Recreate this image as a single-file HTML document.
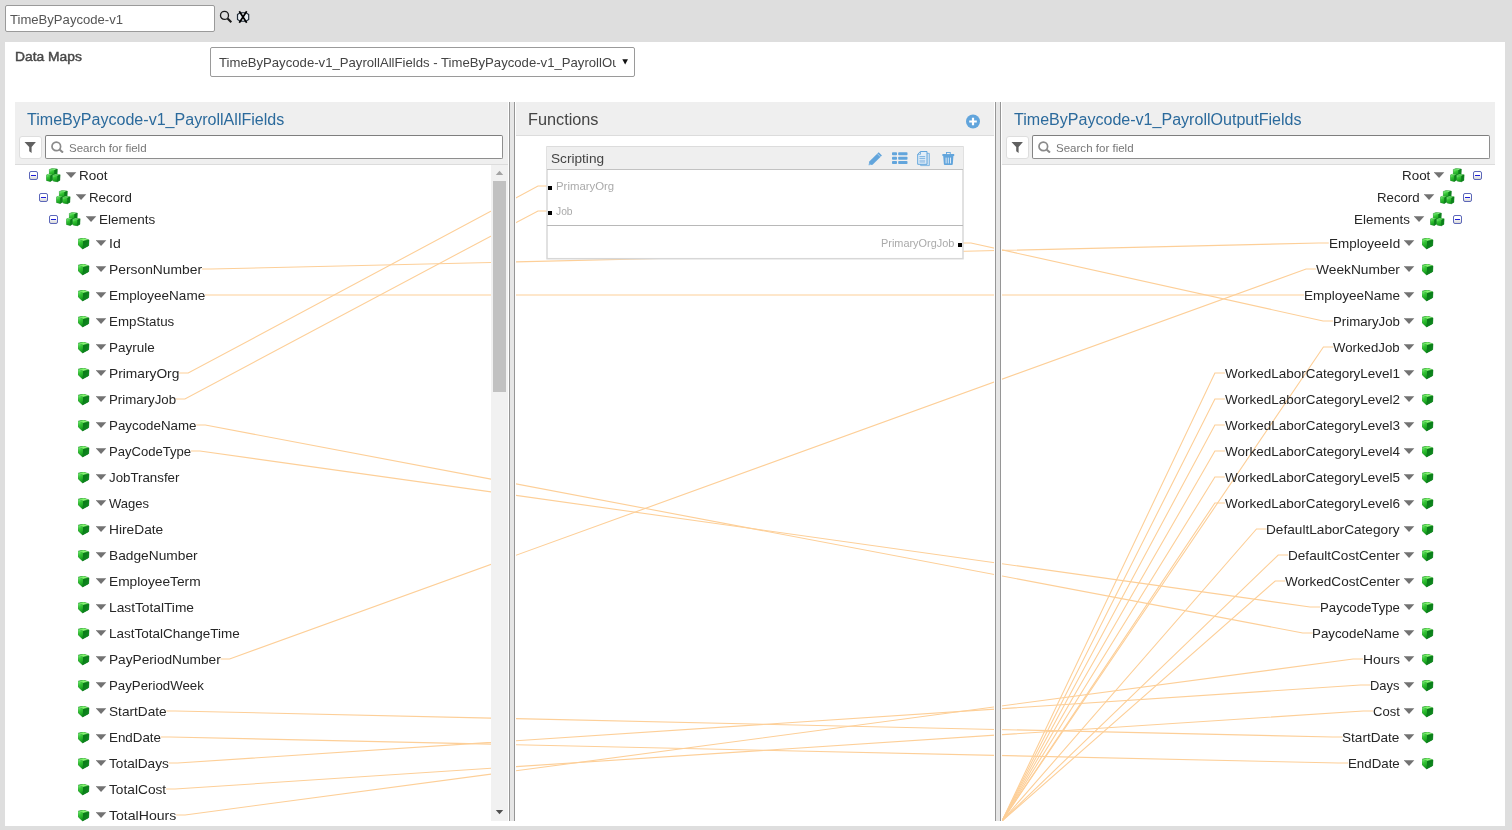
<!DOCTYPE html>
<html><head><meta charset="utf-8"><title>Data Maps</title>
<style>
html,body{margin:0;padding:0}
body{width:1512px;height:830px;overflow:hidden;background:#dedede;position:relative;font-family:'Liberation Sans',sans-serif}
.ab,.t,.bx,.mn{position:absolute}
.t{white-space:pre;transform-origin:0 0;display:block}
.mn{width:7px;height:7px;border:1px solid #5c67b9;border-radius:2px;background:linear-gradient(#fff 35%,#d8d8d8)}
.mn i{position:absolute;left:1px;top:3px;width:5px;height:1px;background:#1d1dd8}
.inp{position:absolute;background:#fff;border:1px solid #9a9a9a;border-radius:2px;box-sizing:border-box}
.hdr{position:absolute;background:#efefef;border-bottom:1px solid #dcdcdc;box-sizing:border-box}
.split{position:absolute;top:102px;height:719px;width:4px;background:#e6e6e6;border-left:1px solid #969696;border-right:1px solid #969696}
</style></head><body>
<svg width="0" height="0" style="position:absolute">
<defs>
<linearGradient id="gT" x1="0" y1="0" x2="1" y2="1"><stop offset="0" stop-color="#35cc35"/><stop offset="0.55" stop-color="#8ff77a"/><stop offset="1" stop-color="#2fbf2f"/></linearGradient>
<linearGradient id="gL" x1="0" y1="0" x2="0.35" y2="1"><stop offset="0" stop-color="#86f286"/><stop offset="0.45" stop-color="#33c433"/><stop offset="1" stop-color="#149a1c"/></linearGradient>
<linearGradient id="gR" x1="0" y1="0" x2="1" y2="1"><stop offset="0" stop-color="#087416"/><stop offset="1" stop-color="#0f8f20"/></linearGradient>
<g id="cube">
<path d="M0.1 1.2L5.4 0L11 1.9L10.6 7.7L4.6 10.9L0.4 6.9Z" fill="#0b7418" stroke="#0b7418" stroke-width="0.5" stroke-linejoin="round"/>
<path d="M0.1 1.2L5.4 0L11 1.9L5.3 3.1Z" fill="url(#gT)"/>
<path d="M0.1 1.2L5.3 3.1L4.6 10.9L0.4 6.9Z" fill="url(#gL)"/>
<path d="M5.3 3.1L11 1.9L10.6 7.7L4.6 10.9Z" fill="url(#gR)"/>
</g>
<g id="scube">
<path d="M0 1.1L2.8 0.1L8 0.7L7.8 6.4L5.2 7.9L0.3 7Z" fill="#0b7418" stroke="#0b7418" stroke-width="0.4" stroke-linejoin="round"/>
<path d="M0 1.1L2.8 0.1L8 0.7L5.3 1.7Z" fill="#7ff07a"/>
<path d="M0 1.1L5.3 1.7L5.2 7.9L0.3 7Z" fill="url(#gL)"/>
<path d="M5.3 1.7L8 0.7L7.8 6.4L5.2 7.9Z" fill="url(#gR)"/>
</g>
<g id="cubes">
<g transform="translate(3.3,0.4)"><use href="#scube"/></g>
<g transform="translate(0.4,6) scale(0.78,0.95)"><use href="#scube"/></g>
<g transform="translate(6.6,6.1) scale(0.94,0.97)"><use href="#scube"/></g>
</g>
</defs></svg>

<!-- top search -->
<div class="inp" style="left:5px;top:5px;width:210px;height:27px"></div>
<svg class="ab" style="left:219px;top:10px" width="14" height="14" viewBox="0 0 14 14"><circle cx="5.5" cy="5.4" r="4" fill="none" stroke="#1a1a1a" stroke-width="1.3"/><path d="M8.6 8.6L12.3 12.3" stroke="#1a1a1a" stroke-width="2.1"/></svg>
<svg class="ab" style="left:236px;top:10px" width="14" height="14" viewBox="0 0 14 14"><path d="M1.5 4.6L4.2 2.8H10L12.7 4.6V9.4L10 11.2H4.2L1.5 9.4Z" fill="#e9eef2" stroke="#1f2a36" stroke-width="1.2"/><path d="M6.3 3.6h1.5v1.3h-1.5zM6.3 9.1h1.5v1.3h-1.5z" fill="#fff"/><path d="M3.3 1.3L10.7 12.7M10.7 1.3L3.3 12.7" stroke="#000" stroke-width="1.7"/></svg>

<!-- main white panel -->
<div class="bx" style="left:5px;top:42px;width:1500px;height:784px;background:#fff"></div>
<div class="inp" style="left:210px;top:47px;width:425px;height:30px"></div>
<svg class="ab" style="left:622px;top:59px" width="7" height="6" viewBox="0 0 7 6"><path d="M0.3 0.3H6L3.15 5.6Z" fill="#111"/></svg>

<!-- panel headers -->
<div class="hdr" style="left:15px;top:102px;width:493px;height:63px"></div>
<div class="hdr" style="left:516px;top:102px;width:478px;height:34px"></div>
<div class="hdr" style="left:1002px;top:102px;width:493px;height:63px"></div>

<!-- connector lines -->
<svg class="ab" style="left:0;top:0" width="1512" height="830" viewBox="0 0 1512 830">
<defs><clipPath id="clp"><rect x="15" y="165" width="476" height="656"/><rect x="516" y="136" width="478" height="685"/><rect x="1002" y="165" width="493" height="656"/></clipPath></defs>
<g clip-path="url(#clp)" fill="none" stroke="#fdcf98" stroke-width="1.1">
<path d="M201.9 269 H210.9 L1318.8 243 H1328.8"/>
<path d="M205.0 295 H214.0 L1294.0 295 H1304.0"/>
<path d="M196.3 425 H205.3 L1302.7 633 H1312.7"/>
<path d="M190.9 451 H199.9 L1310.1 607 H1320.1"/>
<path d="M220.6 659 H229.6 L1306.1 269 H1316.1"/>
<path d="M166.4 711 H175.4 L1332.6 737 H1342.6"/>
<path d="M160.8 737 H169.8 L1338.2 763 H1348.2"/>
<path d="M168.6 763 H177.6 L1360.5 685 H1370.5"/>
<path d="M166.0 789 H175.0 L1363.2 711 H1373.2"/>
<path d="M176.1 815 H185.1 L1353.1 659 H1363.1"/>
<path d="M179.2 373 H188.2 L538.0 186 H548.0"/>
<path d="M175.9 399 H184.9 L538.0 211 H548.0"/>
<path d="M962.0 243 H971.0 L1323.1 321 H1333.1"/>
<path d="M1002 821 L1323.4 347 H1333.4"/>
<path d="M1002 821 L1214.9 373 H1224.9"/>
<path d="M1002 821 L1214.9 399 H1224.9"/>
<path d="M1002 821 L1214.9 425 H1224.9"/>
<path d="M1002 821 L1214.9 451 H1224.9"/>
<path d="M1002 821 L1214.9 477 H1224.9"/>
<path d="M1002 821 L1214.9 503 H1224.9"/>
<path d="M1002 821 L1256.5 529 H1266.5"/>
<path d="M1002 821 L1278.2 555 H1288.2"/>
<path d="M1002 821 L1275.2 581 H1285.2"/>
</g></svg>

<!-- scrollbar -->
<div class="bx" style="left:491px;top:165px;width:17px;height:656px;background:#f1f1f1"></div>
<div class="bx" style="left:493px;top:181px;width:13px;height:211px;background:#c1c1c1"></div>
<svg class="ab" style="left:495px;top:170px" width="9" height="6" viewBox="0 0 9 6"><path d="M4.5 0.8L8.2 5H0.8Z" fill="#a3a3a3"/></svg>
<svg class="ab" style="left:495px;top:809px" width="9" height="6" viewBox="0 0 9 6"><path d="M4.5 5.2L8.2 1H0.8Z" fill="#505050"/></svg>

<!-- splitters -->
<div class="split" style="left:509px"></div>
<div class="split" style="left:995px"></div>

<!-- filter + search boxes -->
<div class="bx" style="left:18.5px;top:135.5px;width:23px;height:23px;box-sizing:border-box;background:#fff;border:1px solid #dedede;border-radius:3px"></div>
<svg class="ab" style="left:24px;top:141px" width="13" height="13" viewBox="0 0 13 13"><path d="M0.5 1H11.9L7.6 5.9V11.9L5.2 10.2V5.9Z" fill="#606060"/></svg>
<div class="inp" style="left:45px;top:135px;width:458px;height:24px;border-radius:2px;border-color:#7e7e7e #8e8e8e #8e8e8e #848484"></div>
<svg class="ab" style="left:51px;top:140px" width="13" height="13" viewBox="0 0 13 13"><circle cx="5.3" cy="6.4" r="4.3" fill="none" stroke="#8a8a8a" stroke-width="1.7"/><path d="M8.5 9.6L12 12.6" stroke="#8a8a8a" stroke-width="2"/></svg>

<div class="bx" style="left:1005.5px;top:135.5px;width:23px;height:23px;box-sizing:border-box;background:#fff;border:1px solid #dedede;border-radius:3px"></div>
<svg class="ab" style="left:1011px;top:141px" width="13" height="13" viewBox="0 0 13 13"><path d="M0.5 1H11.9L7.6 5.9V11.9L5.2 10.2V5.9Z" fill="#606060"/></svg>
<div class="inp" style="left:1032px;top:135px;width:458px;height:24px;border-radius:2px;border-color:#7e7e7e #8e8e8e #8e8e8e #848484"></div>
<svg class="ab" style="left:1038px;top:140px" width="13" height="13" viewBox="0 0 13 13"><circle cx="5.3" cy="6.4" r="4.3" fill="none" stroke="#8a8a8a" stroke-width="1.7"/><path d="M8.5 9.6L12 12.6" stroke="#8a8a8a" stroke-width="2"/></svg>

<!-- plus icon -->
<svg class="ab" style="left:965px;top:114px" width="16" height="16" viewBox="0 0 16 16"><circle cx="8" cy="7.5" r="7" fill="#62a5dc"/><path d="M4.2 7.5H11.8M8 3.7V11.3" stroke="#fff" stroke-width="2.2"/></svg>

<!-- function box -->
<svg class="ab" style="left:540px;top:140px" width="430" height="126" viewBox="540 140 430 126"><rect x="547" y="146.9" width="416" height="111.8" fill="#fff" stroke="#d7d7d7" stroke-width="1.5"/></svg>
<div class="bx" style="left:547.4px;top:147.4px;width:415.2px;height:22px;background:#efefef"></div>
<div class="bx" style="left:547px;top:168.9px;width:416px;height:1.5px;background:#c2c2c2"></div>
<div class="bx" style="left:547px;top:225px;width:416px;height:1px;background:#b8b8b8"></div>
<div class="bx" style="left:548px;top:186px;width:4px;height:4px;background:#000"></div>
<div class="bx" style="left:548px;top:211px;width:4px;height:4px;background:#000"></div>
<div class="bx" style="left:958px;top:243px;width:4px;height:4px;background:#000"></div>
<!-- function icons -->
<svg class="ab" style="left:868px;top:151px" width="15" height="15" viewBox="0 0 15 15"><path d="M0.6 14.3L1.3 10.6L10.7 1.2L13.95 4.45L4.55 13.85Z" fill="#62a5dc"/><path d="M9.3 2.6L12.55 5.85" stroke="#efefef" stroke-width="0.6"/><path d="M1.2 12.6L2.4 13.8" stroke="#eaf2fa" stroke-width="0.7"/></svg>
<svg class="ab" style="left:891px;top:151px" width="18" height="15" viewBox="0 0 18 15"><g fill="#62a5dc"><rect x="1" y="1.3" width="5" height="3" rx="0.8"/><rect x="7.2" y="1.3" width="9.3" height="3" rx="0.8"/><rect x="1" y="5.7" width="5" height="3" rx="0.8"/><rect x="7.2" y="5.7" width="9.3" height="3" rx="0.8"/><rect x="1" y="10.1" width="5" height="3" rx="0.8"/><rect x="7.2" y="10.1" width="9.3" height="3" rx="0.8"/></g></svg>
<svg class="ab" style="left:916px;top:150px" width="15" height="17" viewBox="0 0 15 17"><path d="M4.6 3.4h8.8v12.2h-8.8z" fill="#cfe2f3" stroke="#7ab2e0" stroke-width="0.9"/><path d="M4.4 1.5h6.6v12.8h-9.3v-10.1z" fill="#e2eef8" stroke="#62a5dc" stroke-width="1"/><path d="M1.9 4.3h2.6v-2.6" fill="none" stroke="#62a5dc" stroke-width="0.8"/><path d="M3.4 6.6h5.8M3.4 8.4h5.8" stroke="#62a5dc" stroke-width="0.8"/><path d="M3.4 9.8h5.8v3h-5.8z" fill="#a9cbea"/></svg>
<svg class="ab" style="left:941px;top:150px" width="15" height="17" viewBox="0 0 15 17"><path d="M5 2.1h4.7v2H13.2v1.9H1.4V4.1H5zM2.2 5.9H12.4L11.8 14.3Q11.6 15.1 10.8 15.1H3.8Q3 15.1 2.9 14.3z" fill="#62a5dc"/><path d="M5.9 2.9h2.9v1.2h-2.9z" fill="#efefef"/><path d="M5.1 7.6v5.8M7.3 7.6v5.8M9.5 7.6v5.8" stroke="#e8f1fa" stroke-width="0.9"/></svg>

<!-- tree icons -->
<div class="mn" style="left:29px;top:171px"><i></i></div>
<svg class="ab" style="left:46px;top:168px" width="15" height="15" viewBox="0 0 15 15"><use href="#cubes"/></svg>
<svg class="ab" style="left:66px;top:172px" width="11" height="7" viewBox="0 0 11 7"><path d="M-0.2 0.2H10.3L5.05 6.1Z" fill="#727272"/></svg>
<div class="mn" style="left:1473px;top:171px"><i></i></div>
<svg class="ab" style="left:1450px;top:168px" width="15" height="15" viewBox="0 0 15 15"><use href="#cubes"/></svg>
<svg class="ab" style="left:1434px;top:172px" width="11" height="7" viewBox="0 0 11 7"><path d="M-0.2 0.2H10.3L5.05 6.1Z" fill="#727272"/></svg>
<div class="mn" style="left:39px;top:193px"><i></i></div>
<svg class="ab" style="left:56px;top:190px" width="15" height="15" viewBox="0 0 15 15"><use href="#cubes"/></svg>
<svg class="ab" style="left:76px;top:194px" width="11" height="7" viewBox="0 0 11 7"><path d="M-0.2 0.2H10.3L5.05 6.1Z" fill="#727272"/></svg>
<div class="mn" style="left:1463px;top:193px"><i></i></div>
<svg class="ab" style="left:1440px;top:190px" width="15" height="15" viewBox="0 0 15 15"><use href="#cubes"/></svg>
<svg class="ab" style="left:1424px;top:194px" width="11" height="7" viewBox="0 0 11 7"><path d="M-0.2 0.2H10.3L5.05 6.1Z" fill="#727272"/></svg>
<div class="mn" style="left:49px;top:215px"><i></i></div>
<svg class="ab" style="left:66px;top:212px" width="15" height="15" viewBox="0 0 15 15"><use href="#cubes"/></svg>
<svg class="ab" style="left:86px;top:216px" width="11" height="7" viewBox="0 0 11 7"><path d="M-0.2 0.2H10.3L5.05 6.1Z" fill="#727272"/></svg>
<div class="mn" style="left:1453px;top:215px"><i></i></div>
<svg class="ab" style="left:1430px;top:212px" width="15" height="15" viewBox="0 0 15 15"><use href="#cubes"/></svg>
<svg class="ab" style="left:1414px;top:216px" width="11" height="7" viewBox="0 0 11 7"><path d="M-0.2 0.2H10.3L5.05 6.1Z" fill="#727272"/></svg>
<svg class="ab" style="left:78px;top:238px" width="12" height="12" viewBox="0 0 12 12"><use href="#cube"/></svg>
<svg class="ab" style="left:96px;top:240px" width="11" height="7" viewBox="0 0 11 7"><path d="M-0.2 0.2H10.3L5.05 6.1Z" fill="#727272"/></svg>
<svg class="ab" style="left:78px;top:264px" width="12" height="12" viewBox="0 0 12 12"><use href="#cube"/></svg>
<svg class="ab" style="left:96px;top:266px" width="11" height="7" viewBox="0 0 11 7"><path d="M-0.2 0.2H10.3L5.05 6.1Z" fill="#727272"/></svg>
<svg class="ab" style="left:78px;top:290px" width="12" height="12" viewBox="0 0 12 12"><use href="#cube"/></svg>
<svg class="ab" style="left:96px;top:292px" width="11" height="7" viewBox="0 0 11 7"><path d="M-0.2 0.2H10.3L5.05 6.1Z" fill="#727272"/></svg>
<svg class="ab" style="left:78px;top:316px" width="12" height="12" viewBox="0 0 12 12"><use href="#cube"/></svg>
<svg class="ab" style="left:96px;top:318px" width="11" height="7" viewBox="0 0 11 7"><path d="M-0.2 0.2H10.3L5.05 6.1Z" fill="#727272"/></svg>
<svg class="ab" style="left:78px;top:342px" width="12" height="12" viewBox="0 0 12 12"><use href="#cube"/></svg>
<svg class="ab" style="left:96px;top:344px" width="11" height="7" viewBox="0 0 11 7"><path d="M-0.2 0.2H10.3L5.05 6.1Z" fill="#727272"/></svg>
<svg class="ab" style="left:78px;top:368px" width="12" height="12" viewBox="0 0 12 12"><use href="#cube"/></svg>
<svg class="ab" style="left:96px;top:370px" width="11" height="7" viewBox="0 0 11 7"><path d="M-0.2 0.2H10.3L5.05 6.1Z" fill="#727272"/></svg>
<svg class="ab" style="left:78px;top:394px" width="12" height="12" viewBox="0 0 12 12"><use href="#cube"/></svg>
<svg class="ab" style="left:96px;top:396px" width="11" height="7" viewBox="0 0 11 7"><path d="M-0.2 0.2H10.3L5.05 6.1Z" fill="#727272"/></svg>
<svg class="ab" style="left:78px;top:420px" width="12" height="12" viewBox="0 0 12 12"><use href="#cube"/></svg>
<svg class="ab" style="left:96px;top:422px" width="11" height="7" viewBox="0 0 11 7"><path d="M-0.2 0.2H10.3L5.05 6.1Z" fill="#727272"/></svg>
<svg class="ab" style="left:78px;top:446px" width="12" height="12" viewBox="0 0 12 12"><use href="#cube"/></svg>
<svg class="ab" style="left:96px;top:448px" width="11" height="7" viewBox="0 0 11 7"><path d="M-0.2 0.2H10.3L5.05 6.1Z" fill="#727272"/></svg>
<svg class="ab" style="left:78px;top:472px" width="12" height="12" viewBox="0 0 12 12"><use href="#cube"/></svg>
<svg class="ab" style="left:96px;top:474px" width="11" height="7" viewBox="0 0 11 7"><path d="M-0.2 0.2H10.3L5.05 6.1Z" fill="#727272"/></svg>
<svg class="ab" style="left:78px;top:498px" width="12" height="12" viewBox="0 0 12 12"><use href="#cube"/></svg>
<svg class="ab" style="left:96px;top:500px" width="11" height="7" viewBox="0 0 11 7"><path d="M-0.2 0.2H10.3L5.05 6.1Z" fill="#727272"/></svg>
<svg class="ab" style="left:78px;top:524px" width="12" height="12" viewBox="0 0 12 12"><use href="#cube"/></svg>
<svg class="ab" style="left:96px;top:526px" width="11" height="7" viewBox="0 0 11 7"><path d="M-0.2 0.2H10.3L5.05 6.1Z" fill="#727272"/></svg>
<svg class="ab" style="left:78px;top:550px" width="12" height="12" viewBox="0 0 12 12"><use href="#cube"/></svg>
<svg class="ab" style="left:96px;top:552px" width="11" height="7" viewBox="0 0 11 7"><path d="M-0.2 0.2H10.3L5.05 6.1Z" fill="#727272"/></svg>
<svg class="ab" style="left:78px;top:576px" width="12" height="12" viewBox="0 0 12 12"><use href="#cube"/></svg>
<svg class="ab" style="left:96px;top:578px" width="11" height="7" viewBox="0 0 11 7"><path d="M-0.2 0.2H10.3L5.05 6.1Z" fill="#727272"/></svg>
<svg class="ab" style="left:78px;top:602px" width="12" height="12" viewBox="0 0 12 12"><use href="#cube"/></svg>
<svg class="ab" style="left:96px;top:604px" width="11" height="7" viewBox="0 0 11 7"><path d="M-0.2 0.2H10.3L5.05 6.1Z" fill="#727272"/></svg>
<svg class="ab" style="left:78px;top:628px" width="12" height="12" viewBox="0 0 12 12"><use href="#cube"/></svg>
<svg class="ab" style="left:96px;top:630px" width="11" height="7" viewBox="0 0 11 7"><path d="M-0.2 0.2H10.3L5.05 6.1Z" fill="#727272"/></svg>
<svg class="ab" style="left:78px;top:654px" width="12" height="12" viewBox="0 0 12 12"><use href="#cube"/></svg>
<svg class="ab" style="left:96px;top:656px" width="11" height="7" viewBox="0 0 11 7"><path d="M-0.2 0.2H10.3L5.05 6.1Z" fill="#727272"/></svg>
<svg class="ab" style="left:78px;top:680px" width="12" height="12" viewBox="0 0 12 12"><use href="#cube"/></svg>
<svg class="ab" style="left:96px;top:682px" width="11" height="7" viewBox="0 0 11 7"><path d="M-0.2 0.2H10.3L5.05 6.1Z" fill="#727272"/></svg>
<svg class="ab" style="left:78px;top:706px" width="12" height="12" viewBox="0 0 12 12"><use href="#cube"/></svg>
<svg class="ab" style="left:96px;top:708px" width="11" height="7" viewBox="0 0 11 7"><path d="M-0.2 0.2H10.3L5.05 6.1Z" fill="#727272"/></svg>
<svg class="ab" style="left:78px;top:732px" width="12" height="12" viewBox="0 0 12 12"><use href="#cube"/></svg>
<svg class="ab" style="left:96px;top:734px" width="11" height="7" viewBox="0 0 11 7"><path d="M-0.2 0.2H10.3L5.05 6.1Z" fill="#727272"/></svg>
<svg class="ab" style="left:78px;top:758px" width="12" height="12" viewBox="0 0 12 12"><use href="#cube"/></svg>
<svg class="ab" style="left:96px;top:760px" width="11" height="7" viewBox="0 0 11 7"><path d="M-0.2 0.2H10.3L5.05 6.1Z" fill="#727272"/></svg>
<svg class="ab" style="left:78px;top:784px" width="12" height="12" viewBox="0 0 12 12"><use href="#cube"/></svg>
<svg class="ab" style="left:96px;top:786px" width="11" height="7" viewBox="0 0 11 7"><path d="M-0.2 0.2H10.3L5.05 6.1Z" fill="#727272"/></svg>
<svg class="ab" style="left:78px;top:810px" width="12" height="12" viewBox="0 0 12 12"><use href="#cube"/></svg>
<svg class="ab" style="left:96px;top:812px" width="11" height="7" viewBox="0 0 11 7"><path d="M-0.2 0.2H10.3L5.05 6.1Z" fill="#727272"/></svg>
<svg class="ab" style="left:1422px;top:238px" width="12" height="12" viewBox="0 0 12 12"><use href="#cube"/></svg>
<svg class="ab" style="left:1404px;top:240px" width="11" height="7" viewBox="0 0 11 7"><path d="M-0.2 0.2H10.3L5.05 6.1Z" fill="#727272"/></svg>
<svg class="ab" style="left:1422px;top:264px" width="12" height="12" viewBox="0 0 12 12"><use href="#cube"/></svg>
<svg class="ab" style="left:1404px;top:266px" width="11" height="7" viewBox="0 0 11 7"><path d="M-0.2 0.2H10.3L5.05 6.1Z" fill="#727272"/></svg>
<svg class="ab" style="left:1422px;top:290px" width="12" height="12" viewBox="0 0 12 12"><use href="#cube"/></svg>
<svg class="ab" style="left:1404px;top:292px" width="11" height="7" viewBox="0 0 11 7"><path d="M-0.2 0.2H10.3L5.05 6.1Z" fill="#727272"/></svg>
<svg class="ab" style="left:1422px;top:316px" width="12" height="12" viewBox="0 0 12 12"><use href="#cube"/></svg>
<svg class="ab" style="left:1404px;top:318px" width="11" height="7" viewBox="0 0 11 7"><path d="M-0.2 0.2H10.3L5.05 6.1Z" fill="#727272"/></svg>
<svg class="ab" style="left:1422px;top:342px" width="12" height="12" viewBox="0 0 12 12"><use href="#cube"/></svg>
<svg class="ab" style="left:1404px;top:344px" width="11" height="7" viewBox="0 0 11 7"><path d="M-0.2 0.2H10.3L5.05 6.1Z" fill="#727272"/></svg>
<svg class="ab" style="left:1422px;top:368px" width="12" height="12" viewBox="0 0 12 12"><use href="#cube"/></svg>
<svg class="ab" style="left:1404px;top:370px" width="11" height="7" viewBox="0 0 11 7"><path d="M-0.2 0.2H10.3L5.05 6.1Z" fill="#727272"/></svg>
<svg class="ab" style="left:1422px;top:394px" width="12" height="12" viewBox="0 0 12 12"><use href="#cube"/></svg>
<svg class="ab" style="left:1404px;top:396px" width="11" height="7" viewBox="0 0 11 7"><path d="M-0.2 0.2H10.3L5.05 6.1Z" fill="#727272"/></svg>
<svg class="ab" style="left:1422px;top:420px" width="12" height="12" viewBox="0 0 12 12"><use href="#cube"/></svg>
<svg class="ab" style="left:1404px;top:422px" width="11" height="7" viewBox="0 0 11 7"><path d="M-0.2 0.2H10.3L5.05 6.1Z" fill="#727272"/></svg>
<svg class="ab" style="left:1422px;top:446px" width="12" height="12" viewBox="0 0 12 12"><use href="#cube"/></svg>
<svg class="ab" style="left:1404px;top:448px" width="11" height="7" viewBox="0 0 11 7"><path d="M-0.2 0.2H10.3L5.05 6.1Z" fill="#727272"/></svg>
<svg class="ab" style="left:1422px;top:472px" width="12" height="12" viewBox="0 0 12 12"><use href="#cube"/></svg>
<svg class="ab" style="left:1404px;top:474px" width="11" height="7" viewBox="0 0 11 7"><path d="M-0.2 0.2H10.3L5.05 6.1Z" fill="#727272"/></svg>
<svg class="ab" style="left:1422px;top:498px" width="12" height="12" viewBox="0 0 12 12"><use href="#cube"/></svg>
<svg class="ab" style="left:1404px;top:500px" width="11" height="7" viewBox="0 0 11 7"><path d="M-0.2 0.2H10.3L5.05 6.1Z" fill="#727272"/></svg>
<svg class="ab" style="left:1422px;top:524px" width="12" height="12" viewBox="0 0 12 12"><use href="#cube"/></svg>
<svg class="ab" style="left:1404px;top:526px" width="11" height="7" viewBox="0 0 11 7"><path d="M-0.2 0.2H10.3L5.05 6.1Z" fill="#727272"/></svg>
<svg class="ab" style="left:1422px;top:550px" width="12" height="12" viewBox="0 0 12 12"><use href="#cube"/></svg>
<svg class="ab" style="left:1404px;top:552px" width="11" height="7" viewBox="0 0 11 7"><path d="M-0.2 0.2H10.3L5.05 6.1Z" fill="#727272"/></svg>
<svg class="ab" style="left:1422px;top:576px" width="12" height="12" viewBox="0 0 12 12"><use href="#cube"/></svg>
<svg class="ab" style="left:1404px;top:578px" width="11" height="7" viewBox="0 0 11 7"><path d="M-0.2 0.2H10.3L5.05 6.1Z" fill="#727272"/></svg>
<svg class="ab" style="left:1422px;top:602px" width="12" height="12" viewBox="0 0 12 12"><use href="#cube"/></svg>
<svg class="ab" style="left:1404px;top:604px" width="11" height="7" viewBox="0 0 11 7"><path d="M-0.2 0.2H10.3L5.05 6.1Z" fill="#727272"/></svg>
<svg class="ab" style="left:1422px;top:628px" width="12" height="12" viewBox="0 0 12 12"><use href="#cube"/></svg>
<svg class="ab" style="left:1404px;top:630px" width="11" height="7" viewBox="0 0 11 7"><path d="M-0.2 0.2H10.3L5.05 6.1Z" fill="#727272"/></svg>
<svg class="ab" style="left:1422px;top:654px" width="12" height="12" viewBox="0 0 12 12"><use href="#cube"/></svg>
<svg class="ab" style="left:1404px;top:656px" width="11" height="7" viewBox="0 0 11 7"><path d="M-0.2 0.2H10.3L5.05 6.1Z" fill="#727272"/></svg>
<svg class="ab" style="left:1422px;top:680px" width="12" height="12" viewBox="0 0 12 12"><use href="#cube"/></svg>
<svg class="ab" style="left:1404px;top:682px" width="11" height="7" viewBox="0 0 11 7"><path d="M-0.2 0.2H10.3L5.05 6.1Z" fill="#727272"/></svg>
<svg class="ab" style="left:1422px;top:706px" width="12" height="12" viewBox="0 0 12 12"><use href="#cube"/></svg>
<svg class="ab" style="left:1404px;top:708px" width="11" height="7" viewBox="0 0 11 7"><path d="M-0.2 0.2H10.3L5.05 6.1Z" fill="#727272"/></svg>
<svg class="ab" style="left:1422px;top:732px" width="12" height="12" viewBox="0 0 12 12"><use href="#cube"/></svg>
<svg class="ab" style="left:1404px;top:734px" width="11" height="7" viewBox="0 0 11 7"><path d="M-0.2 0.2H10.3L5.05 6.1Z" fill="#727272"/></svg>
<svg class="ab" style="left:1422px;top:758px" width="12" height="12" viewBox="0 0 12 12"><use href="#cube"/></svg>
<svg class="ab" style="left:1404px;top:760px" width="11" height="7" viewBox="0 0 11 7"><path d="M-0.2 0.2H10.3L5.05 6.1Z" fill="#727272"/></svg>
<!-- texts -->
<div id="txt" style="position:absolute;left:0;top:0;width:1512px;height:830px;will-change:transform">
<span class="t" style="left:78.5px;top:168.3px;font-size:13px;line-height:16px;color:#262626;transform:scaleX(1.0386)">Root</span>
<span class="t" style="left:1401.5px;top:168.3px;font-size:13px;line-height:16px;color:#262626;transform:scaleX(1.0313)">Root</span>
<span class="t" style="left:88.5px;top:190.3px;font-size:13px;line-height:16px;color:#262626;transform:scaleX(1.0220)">Record</span>
<span class="t" style="left:1377.2px;top:190.3px;font-size:13px;line-height:16px;color:#262626;transform:scaleX(1.0172)">Record</span>
<span class="t" style="left:98.5px;top:212.3px;font-size:13px;line-height:16px;color:#262626;transform:scaleX(1.0362)">Elements</span>
<span class="t" style="left:1353.8px;top:212.3px;font-size:13px;line-height:16px;color:#262626;transform:scaleX(1.0325)">Elements</span>
<span class="t" style="left:108.5px;top:236.3px;font-size:13px;line-height:16px;color:#262626;transform:scaleX(1.0781)">Id</span>
<span class="t" style="left:108.5px;top:262.3px;font-size:13px;line-height:16px;color:#262626;transform:scaleX(1.0647)">PersonNumber</span>
<span class="t" style="left:108.5px;top:288.3px;font-size:13px;line-height:16px;color:#262626;transform:scaleX(1.0398)">EmployeeName</span>
<span class="t" style="left:108.5px;top:314.3px;font-size:13px;line-height:16px;color:#262626;transform:scaleX(1.0255)">EmpStatus</span>
<span class="t" style="left:108.5px;top:340.3px;font-size:13px;line-height:16px;color:#262626;transform:scaleX(1.0362)">Payrule</span>
<span class="t" style="left:108.5px;top:366.3px;font-size:13px;line-height:16px;color:#262626;transform:scaleX(1.0587)">PrimaryOrg</span>
<span class="t" style="left:108.5px;top:392.3px;font-size:13px;line-height:16px;color:#262626;transform:scaleX(1.0204)">PrimaryJob</span>
<span class="t" style="left:108.5px;top:418.3px;font-size:13px;line-height:16px;color:#262626;transform:scaleX(1.0263)">PaycodeName</span>
<span class="t" style="left:108.5px;top:444.3px;font-size:13px;line-height:16px;color:#262626;transform:scaleX(1.0055)">PayCodeType</span>
<span class="t" style="left:108.5px;top:470.3px;font-size:13px;line-height:16px;color:#262626;transform:scaleX(1.0220)">JobTransfer</span>
<span class="t" style="left:108.5px;top:496.3px;font-size:13px;line-height:16px;color:#262626;transform:scaleX(1.0024)">Wages</span>
<span class="t" style="left:108.5px;top:522.3px;font-size:13px;line-height:16px;color:#262626;transform:scaleX(1.0579)">HireDate</span>
<span class="t" style="left:108.5px;top:548.3px;font-size:13px;line-height:16px;color:#262626;transform:scaleX(1.0578)">BadgeNumber</span>
<span class="t" style="left:108.5px;top:574.3px;font-size:13px;line-height:16px;color:#262626;transform:scaleX(1.0571)">EmployeeTerm</span>
<span class="t" style="left:108.5px;top:600.3px;font-size:13px;line-height:16px;color:#262626;transform:scaleX(1.0565)">LastTotalTime</span>
<span class="t" style="left:108.5px;top:626.3px;font-size:13px;line-height:16px;color:#262626;transform:scaleX(1.0381)">LastTotalChangeTime</span>
<span class="t" style="left:108.5px;top:652.3px;font-size:13px;line-height:16px;color:#262626;transform:scaleX(1.0523)">PayPeriodNumber</span>
<span class="t" style="left:108.5px;top:678.3px;font-size:13px;line-height:16px;color:#262626;transform:scaleX(1.0194)">PayPeriodWeek</span>
<span class="t" style="left:108.5px;top:704.3px;font-size:13px;line-height:16px;color:#262626;transform:scaleX(1.0495)">StartDate</span>
<span class="t" style="left:108.5px;top:730.3px;font-size:13px;line-height:16px;color:#262626;transform:scaleX(1.0271)">EndDate</span>
<span class="t" style="left:108.5px;top:756.3px;font-size:13px;line-height:16px;color:#262626;transform:scaleX(1.0479)">TotalDays</span>
<span class="t" style="left:108.5px;top:782.3px;font-size:13px;line-height:16px;color:#262626;transform:scaleX(1.0552)">TotalCost</span>
<span class="t" style="left:108.5px;top:808.3px;font-size:13px;line-height:16px;color:#262626;transform:scaleX(1.0827)">TotalHours</span>
<span class="t" style="left:1328.5px;top:236.3px;font-size:13px;line-height:16px;color:#262626;transform:scaleX(1.0364)">EmployeeId</span>
<span class="t" style="left:1315.8px;top:262.3px;font-size:13px;line-height:16px;color:#262626;transform:scaleX(1.0587)">WeekNumber</span>
<span class="t" style="left:1303.7px;top:288.3px;font-size:13px;line-height:16px;color:#262626;transform:scaleX(1.0377)">EmployeeName</span>
<span class="t" style="left:1332.8px;top:314.3px;font-size:13px;line-height:16px;color:#262626;transform:scaleX(1.0174)">PrimaryJob</span>
<span class="t" style="left:1333.1px;top:340.3px;font-size:13px;line-height:16px;color:#262626;transform:scaleX(1.0161)">WorkedJob</span>
<span class="t" style="left:1224.6px;top:366.3px;font-size:13px;line-height:16px;color:#262626;transform:scaleX(1.0368)">WorkedLaborCategoryLevel1</span>
<span class="t" style="left:1224.6px;top:392.3px;font-size:13px;line-height:16px;color:#262626;transform:scaleX(1.0368)">WorkedLaborCategoryLevel2</span>
<span class="t" style="left:1224.6px;top:418.3px;font-size:13px;line-height:16px;color:#262626;transform:scaleX(1.0368)">WorkedLaborCategoryLevel3</span>
<span class="t" style="left:1224.6px;top:444.3px;font-size:13px;line-height:16px;color:#262626;transform:scaleX(1.0368)">WorkedLaborCategoryLevel4</span>
<span class="t" style="left:1224.6px;top:470.3px;font-size:13px;line-height:16px;color:#262626;transform:scaleX(1.0368)">WorkedLaborCategoryLevel5</span>
<span class="t" style="left:1224.6px;top:496.3px;font-size:13px;line-height:16px;color:#262626;transform:scaleX(1.0368)">WorkedLaborCategoryLevel6</span>
<span class="t" style="left:1266.2px;top:522.3px;font-size:13px;line-height:16px;color:#262626;transform:scaleX(1.0496)">DefaultLaborCategory</span>
<span class="t" style="left:1287.9px;top:548.3px;font-size:13px;line-height:16px;color:#262626;transform:scaleX(1.0450)">DefaultCostCenter</span>
<span class="t" style="left:1284.9px;top:574.3px;font-size:13px;line-height:16px;color:#262626;transform:scaleX(1.0405)">WorkedCostCenter</span>
<span class="t" style="left:1319.8px;top:600.3px;font-size:13px;line-height:16px;color:#262626;transform:scaleX(1.0143)">PaycodeType</span>
<span class="t" style="left:1312.4px;top:626.3px;font-size:13px;line-height:16px;color:#262626;transform:scaleX(1.0240)">PaycodeName</span>
<span class="t" style="left:1362.8px;top:652.3px;font-size:13px;line-height:16px;color:#262626;transform:scaleX(1.0647)">Hours</span>
<span class="t" style="left:1370.2px;top:678.3px;font-size:13px;line-height:16px;color:#262626;transform:scaleX(0.9944)">Days</span>
<span class="t" style="left:1372.9px;top:704.3px;font-size:13px;line-height:16px;color:#262626;transform:scaleX(1.0041)">Cost</span>
<span class="t" style="left:1342.3px;top:730.3px;font-size:13px;line-height:16px;color:#262626;transform:scaleX(1.0458)">StartDate</span>
<span class="t" style="left:1347.9px;top:756.3px;font-size:13px;line-height:16px;color:#262626;transform:scaleX(1.0232)">EndDate</span>
<span class="t" style="left:9.5px;top:11.5px;font-size:13px;line-height:16px;color:#555;transform:scaleX(1.0068)">TimeByPaycode-v1</span>
<span class="t" style="left:15.0px;top:48.7px;font-size:13px;line-height:16px;color:#484848;transform:scaleX(1.0624);-webkit-text-stroke:0.45px #484848">Data Maps</span>
<div class="bx" style="left:211px;top:48px;width:405px;height:28px;overflow:hidden"><span class="t" style="left:7.5px;top:6.7px;font-size:13px;line-height:16px;color:#444;transform:scaleX(1.0108)">TimeByPaycode-v1_PayrollAllFields - TimeByPaycode-v1_PayrollOutputFields</span></div>
<span class="t" style="left:26.9px;top:109.5px;font-size:16px;line-height:19px;color:#2b6a9c;transform:scaleX(1.0035)">TimeByPaycode-v1_PayrollAllFields</span>
<span class="t" style="left:527.9px;top:109.5px;font-size:16px;line-height:19px;color:#444;transform:scaleX(1.0162)">Functions</span>
<span class="t" style="left:1013.9px;top:109.5px;font-size:16px;line-height:19px;color:#2b6a9c;transform:scaleX(1.0030)">TimeByPaycode-v1_PayrollOutputFields</span>
<span class="t" style="left:69.0px;top:141.9px;font-size:11px;line-height:13px;color:#777;transform:scaleX(1.0487)">Search for field</span>
<span class="t" style="left:1056.0px;top:141.9px;font-size:11px;line-height:13px;color:#777;transform:scaleX(1.0487)">Search for field</span>
<span class="t" style="left:550.6px;top:150.5px;font-size:13px;line-height:16px;color:#444;transform:scaleX(1.0491)">Scripting</span>
<span class="t" style="left:556.0px;top:179.5px;font-size:11px;line-height:13px;color:#aaa;transform:scaleX(1.0350)">PrimaryOrg</span>
<span class="t" style="left:556.0px;top:204.5px;font-size:11px;line-height:13px;color:#aaa;transform:scaleX(0.9352)">Job</span>
<span class="t" style="left:881.1px;top:236.5px;font-size:11px;line-height:13px;color:#aaa;transform:scaleX(0.9910)">PrimaryOrgJob</span>
</div>
</body></html>
